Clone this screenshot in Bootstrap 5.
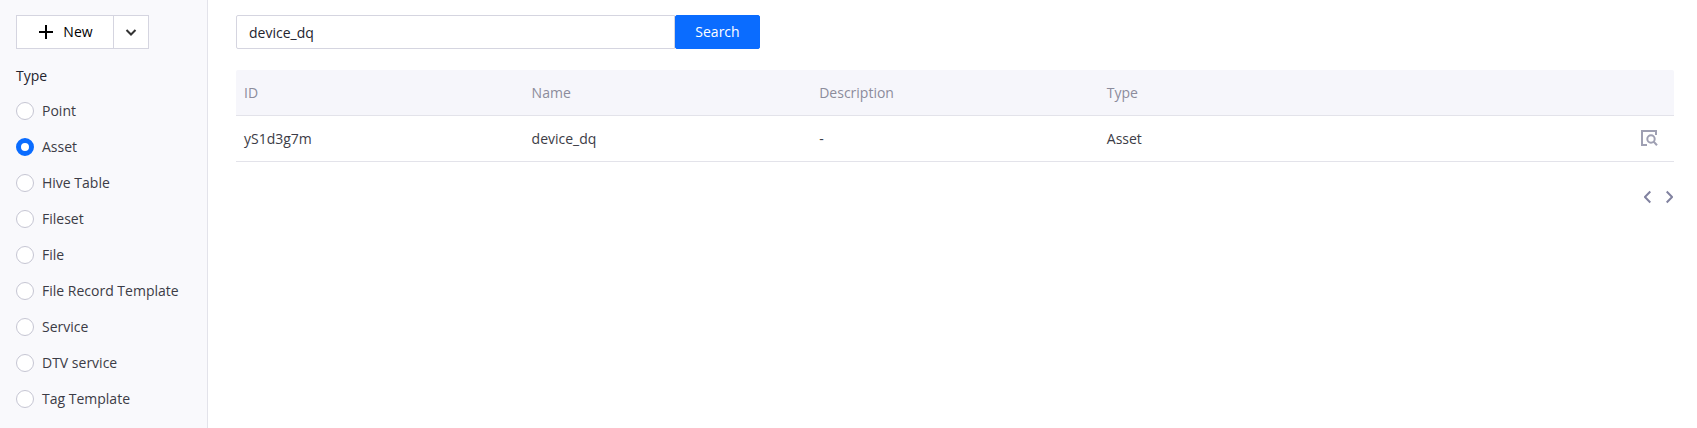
<!DOCTYPE html>
<html lang="en">
<head>
<meta charset="utf-8">
<meta name="viewport" content="width=device-width, initial-scale=1">
<title>Data Quality</title>
<link rel="stylesheet" href="https://cdn.jsdelivr.net/npm/bootstrap@5.3.0/dist/css/bootstrap.min.css">
<style>
  body { font-family: "Open Sans", "Noto Sans", sans-serif; font-size: 14px; line-height: 20px; color: #3c3c46; background: #fff; }
  .sidebar { width: 208px; background: #f9f9fc; border-right: 1px solid #e3e3ea; padding: 15px 16px 8px; }
  .btn, .form-control { height: 34px; font-size: 14px; line-height: 20px; border-radius: 0; }
  .btn-new { --bs-btn-color: #000; --bs-btn-bg: #fff; --bs-btn-border-color: #d5d5e0; --bs-btn-hover-bg: #f4f4f8; --bs-btn-hover-border-color: #d5d5e0; padding: 0; }
  .btn-main { width: 98px; gap: 10px; padding-left: 2px; }
  .btn-caret { width: 35px; }
  .type-title { font-size: 14px; line-height: 20px; margin: 17px 0 7px; color: #24242e; }
  .form-check { height: 36px; gap: 8px; }
  .form-check-input[type=radio] { width: 18px; height: 18px; border-color: #c6c6d3; }
  .form-check-input[type=radio]:checked { background: #fff; border: 5px solid #0a6cff; }
  .content { padding: 15px 23px 15px 28px; min-width: 0; }
  .search-bar { max-width: 524px; }
  .search-bar .form-control { border-color: #d5d5e0; border-radius: 2px 0 0 2px; color: #24242e; padding: 0 12px; }
  .btn-search { --bs-btn-color: #fff; --bs-btn-bg: #0a6cff; --bs-btn-border-color: #0a6cff; --bs-btn-hover-color: #fff; --bs-btn-hover-bg: #0a5fe0; width: 85px; border-radius: 2px; padding: 0; }
  .asset-table { table-layout: fixed; border-collapse: separate; border-spacing: 0; margin: 21px 0 24px; --bs-table-color: #3c3c46; }
  .asset-table > :not(caption) > * > * { padding: 12px 8px; line-height: 21px; border-bottom: 1px solid #e3e3ea; }
  .asset-table > thead > tr > th { background: #f6f6fb; color: #8c8c9c; font-weight: 400; }
  .asset-table > thead th:first-child { border-top-left-radius: 2px; }
  .asset-table > thead th:last-child { border-top-right-radius: 2px; }
  .icon-btn { color: #9fa0b3; border: 0; background: none; padding: 0; line-height: 0; }
  .view-btn { margin-right: 8px; }
  .pager { padding-right: 1px; gap: 15px; }
  .pager .icon-btn { color: #8182a0; }
</style>
</head>
<body>
<div class="d-flex min-vh-100">
  <aside class="sidebar flex-shrink-0">
    <div class="d-flex">
      <button type="button" class="btn btn-new btn-main d-flex align-items-center justify-content-center">
        <svg width="14" height="14" viewBox="0 0 14 14" fill="none" stroke="currentColor" stroke-width="2" aria-hidden="true"><path d="M7 0v14M0 7h14"/></svg>
        New
      </button>
      <button type="button" class="btn btn-new btn-caret border-start-0 d-flex align-items-center justify-content-center" aria-label="More options">
        <svg width="12" height="8" viewBox="0 0 12 8" fill="none" stroke="#333" stroke-width="2" aria-hidden="true"><path d="M1.500 2 6 6.500 10.500 2"/></svg>
      </button>
    </div>
    <fieldset>
      <legend class="type-title">Type</legend>
      <div class="form-check d-flex align-items-center p-0 m-0"><input class="form-check-input m-0" type="radio" name="type" id="t1"><label for="t1">Point</label></div>
      <div class="form-check d-flex align-items-center p-0 m-0"><input class="form-check-input m-0" type="radio" name="type" id="t2" checked><label for="t2">Asset</label></div>
      <div class="form-check d-flex align-items-center p-0 m-0"><input class="form-check-input m-0" type="radio" name="type" id="t3"><label for="t3">Hive Table</label></div>
      <div class="form-check d-flex align-items-center p-0 m-0"><input class="form-check-input m-0" type="radio" name="type" id="t4"><label for="t4">Fileset</label></div>
      <div class="form-check d-flex align-items-center p-0 m-0"><input class="form-check-input m-0" type="radio" name="type" id="t5"><label for="t5">File</label></div>
      <div class="form-check d-flex align-items-center p-0 m-0"><input class="form-check-input m-0" type="radio" name="type" id="t6"><label for="t6">File Record Template</label></div>
      <div class="form-check d-flex align-items-center p-0 m-0"><input class="form-check-input m-0" type="radio" name="type" id="t7"><label for="t7">Service</label></div>
      <div class="form-check d-flex align-items-center p-0 m-0"><input class="form-check-input m-0" type="radio" name="type" id="t8"><label for="t8">DTV service</label></div>
      <div class="form-check d-flex align-items-center p-0 m-0"><input class="form-check-input m-0" type="radio" name="type" id="t9"><label for="t9">Tag Template</label></div>
    </fieldset>
  </aside>

  <main class="content flex-grow-1">
    <form class="search-bar d-flex">
      <input type="text" class="form-control" value="device_dq" aria-label="Search by name">
      <button type="button" class="btn btn-search flex-shrink-0">Search</button>
    </form>

    <table class="table asset-table align-middle">
      <thead>
        <tr><th scope="col">ID</th><th scope="col">Name</th><th scope="col">Description</th><th scope="col">Type</th><th></th></tr>
      </thead>
      <tbody>
        <tr>
          <td>yS1d3g7m</td><td>device_dq</td><td>-</td><td>Asset</td>
          <td>
            <div class="d-flex justify-content-end">
              <button type="button" class="icon-btn view-btn" aria-label="View">
                <svg width="17" height="18" viewBox="0 0 17 18" fill="none" stroke="currentColor" stroke-width="2" aria-hidden="true"><path d="M6 15H1V1h14v4"/><circle cx="10" cy="9" r="3.700"/><path d="m12.500 11.500 3.500 3.700"/></svg>
              </button>
            </div>
          </td>
        </tr>
      </tbody>
    </table>

    <nav class="pager d-flex justify-content-end" aria-label="Pages">
      <button type="button" class="icon-btn" aria-label="Previous page"><svg width="7" height="22" viewBox="0 0 7 22" fill="none" stroke="currentColor" stroke-width="2" aria-hidden="true"><path d="M6.300 5.500.900 11l5.400 5.500"/></svg></button>
      <button type="button" class="icon-btn" aria-label="Next page"><svg width="7" height="22" viewBox="0 0 7 22" fill="none" stroke="currentColor" stroke-width="2" aria-hidden="true"><path d="M.700 5.500 6.100 11l-5.400 5.500"/></svg></button>
    </nav>
  </main>
</div>
<script src="https://cdn.jsdelivr.net/npm/bootstrap@5.3.0/dist/js/bootstrap.bundle.min.js"></script>
</body>
</html>
